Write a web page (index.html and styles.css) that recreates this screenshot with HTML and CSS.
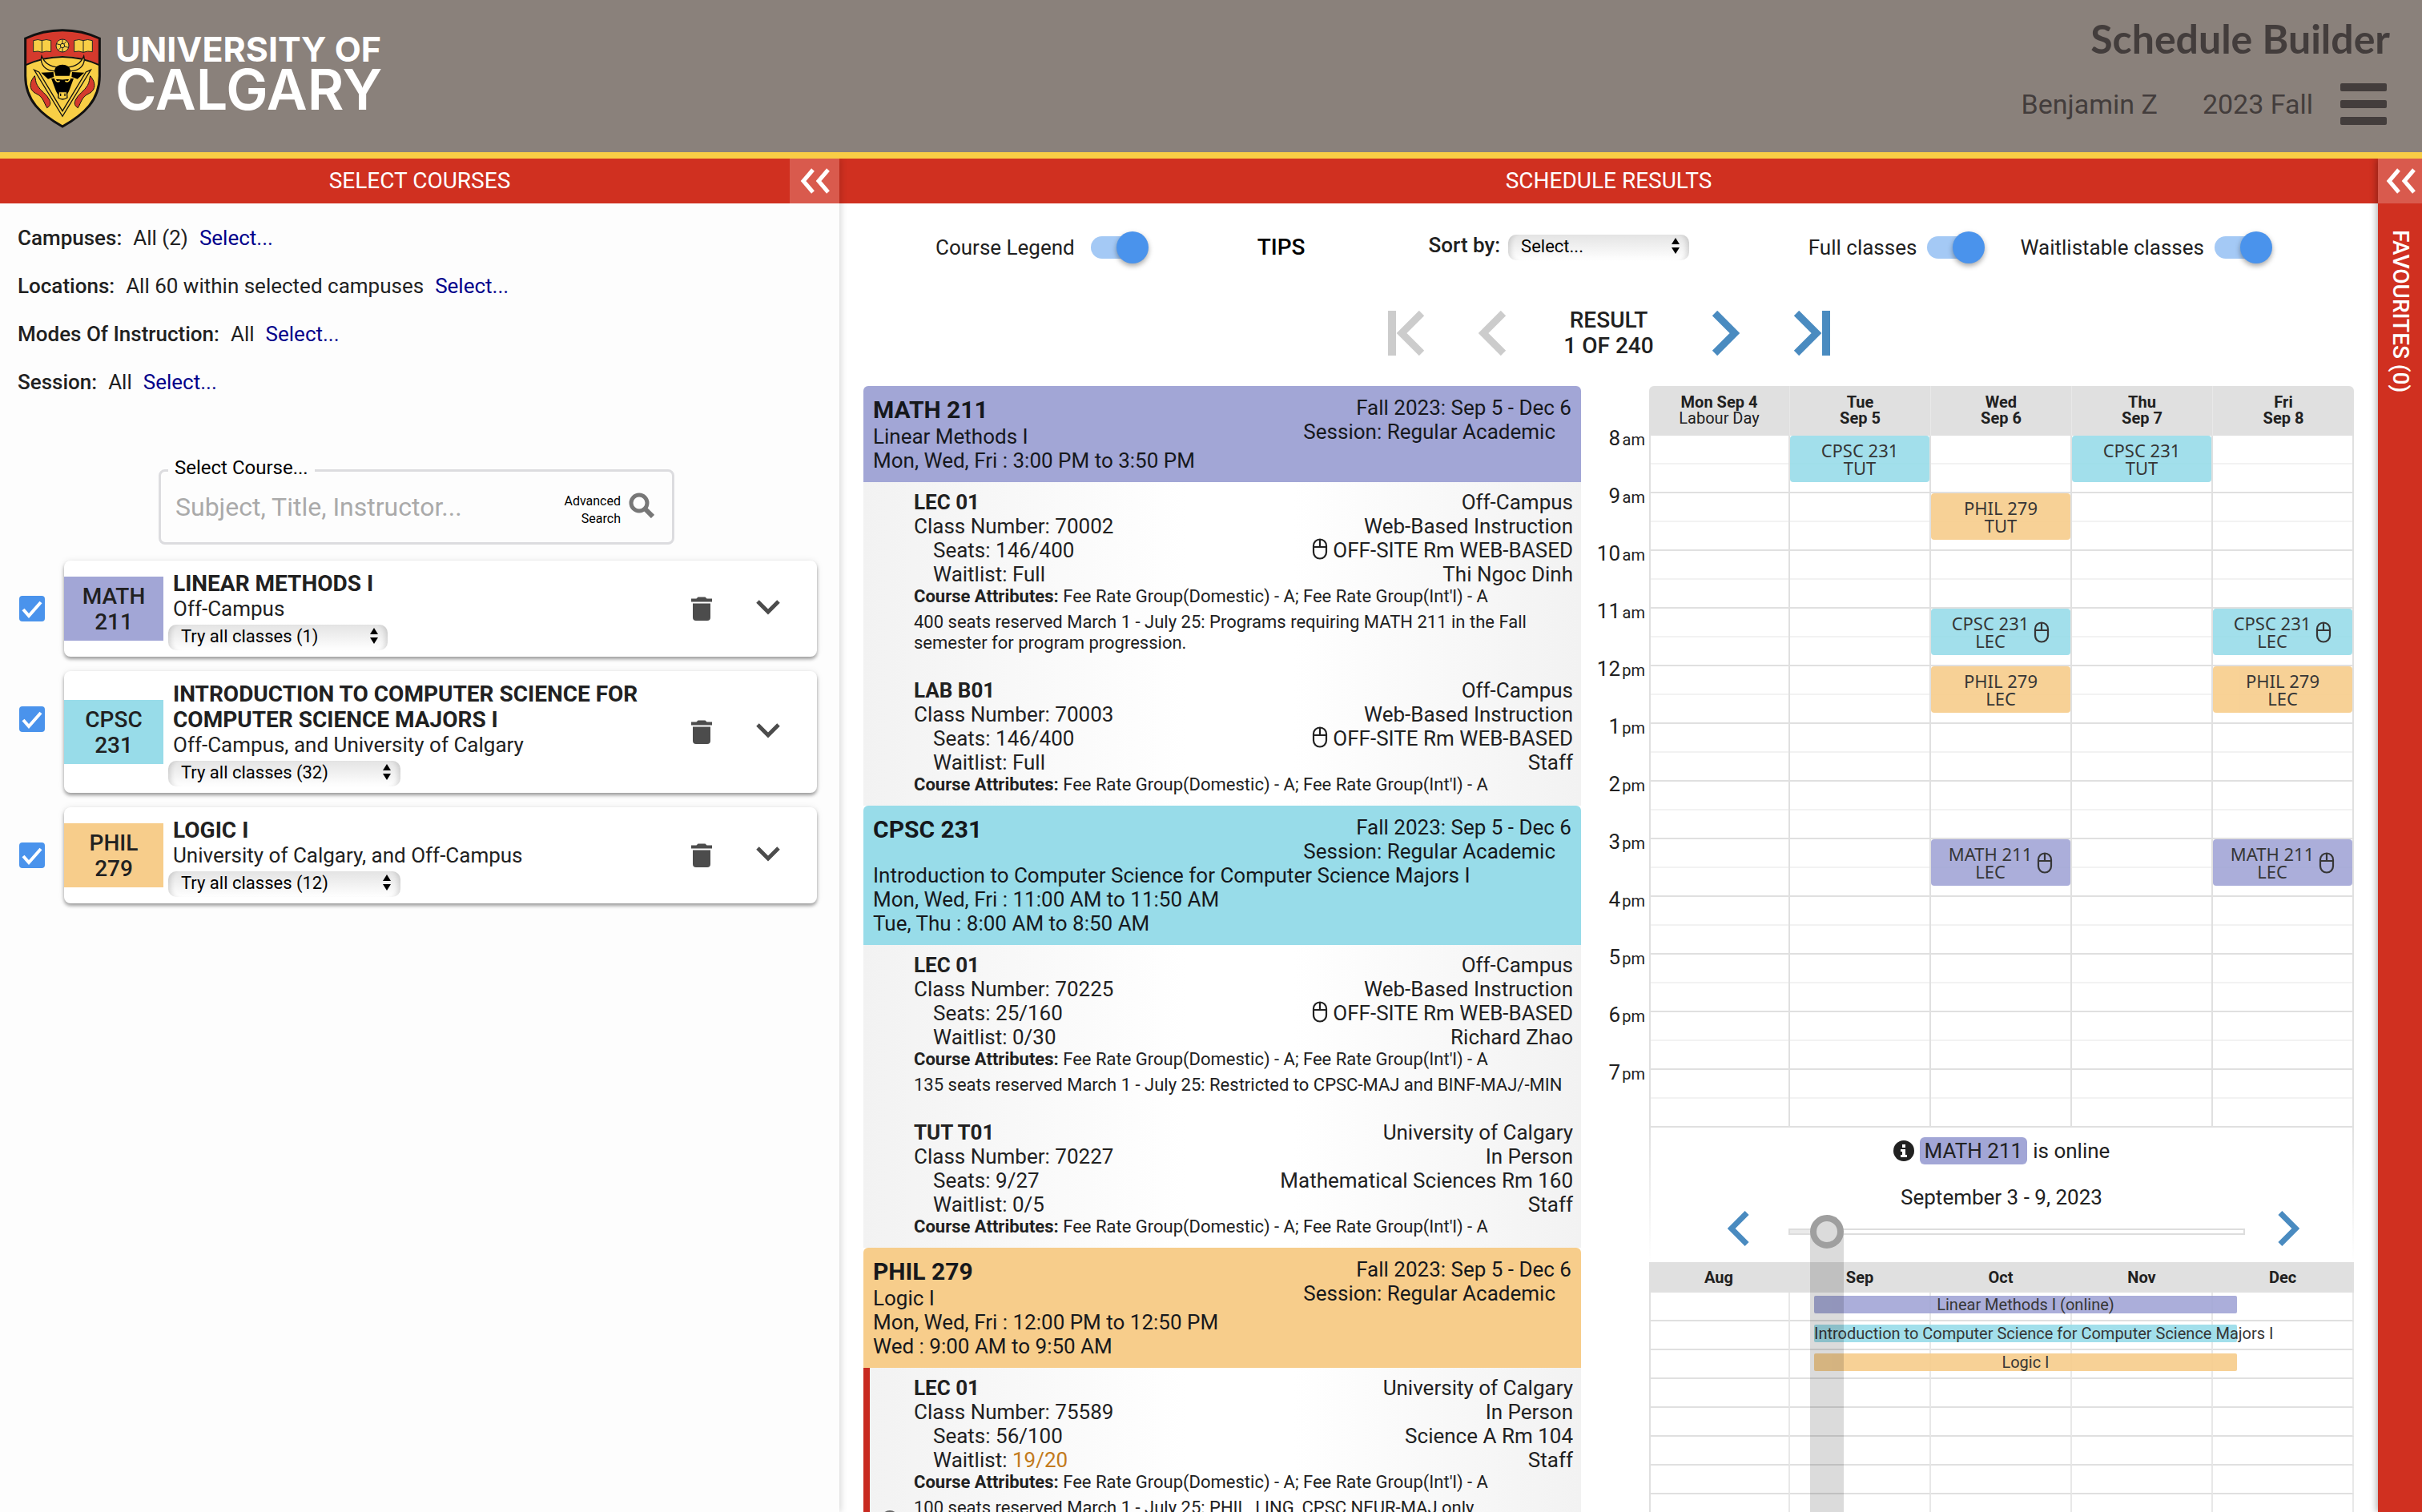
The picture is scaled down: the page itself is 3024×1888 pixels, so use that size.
FILE: index.html
```html
<!DOCTYPE html>
<html lang="en">
<head>
<meta charset="utf-8">
<title>Schedule Builder</title>
<link rel="stylesheet" href="styles.css">
</head>
<body>
<svg class="sprite" aria-hidden="true">
  <symbol id="double-left" viewBox="0 0 40 32"><path d="M18 2 6 16l12 14M37 2 25 16l12 14" fill="none" stroke="currentColor" stroke-width="5"/></symbol>
  <symbol id="left" viewBox="0 0 36 56"><path d="M31 3 6 28l25 25" fill="none" stroke="currentColor" stroke-width="9"/></symbol>
  <symbol id="right" viewBox="0 0 36 56"><path d="M5 3l25 25L5 53" fill="none" stroke="currentColor" stroke-width="9"/></symbol>
  <symbol id="first" viewBox="0 0 46 56"><path d="M0 0h10v56H0z" fill="currentColor"/><path d="M42 3 17 28l25 25" fill="none" stroke="currentColor" stroke-width="9"/></symbol>
  <symbol id="last" viewBox="0 0 46 56"><path d="M36 0h10v56H36z" fill="currentColor"/><path d="M4 3l25 25L4 53" fill="none" stroke="currentColor" stroke-width="9"/></symbol>
  <symbol id="down" viewBox="0 0 30 22"><path d="M2 2l13 13L28 2" fill="none" stroke="currentColor" stroke-width="5"/></symbol>
  <symbol id="trash" viewBox="0 0 26 30"><path d="M0 2.500h6.500l2-2h9l2 2H26v4H0zM2 8.500h22V26a4 4 0 0 1-4 4H6a4 4 0 0 1-4-4z" fill="currentColor"/></symbol>
  <symbol id="mouse" viewBox="0 0 20 27"><path d="M10 1.500a8 8 0 0 1 8 8v8a8 8 0 0 1-16 0v-8a8 8 0 0 1 8-8zM2 11h16M10 2v9" fill="none" stroke="currentColor" stroke-width="2.200"/></symbol>
  <symbol id="updown" viewBox="0 0 10 20"><path d="M5 0l5 8H0zM5 20l5-8H0z" fill="currentColor"/></symbol>
  <symbol id="search" viewBox="0 0 32 32"><circle cx="13" cy="13" r="10" fill="none" stroke="currentColor" stroke-width="5"/><path d="M20 20l10 10" stroke="currentColor" stroke-width="6"/></symbol>
</svg>

<header class="banner">
  <div class="logo">
    <svg class="shield" viewBox="60 48 288 372" role="img" aria-label="Crest">
      <path d="M65 84Q130 53 204 53t139 31v140c0 92-58 144-139 190C123 368 65 316 65 224z" fill="#f8cf46"/>
      <path d="M65 84Q130 53 204 53t139 31v98q-68-32-139-32T65 182z" fill="#d53a2d"/>
      <path d="M65 184Q134 153 204 153t139 31" fill="none" stroke="#111" stroke-width="6"/>
      <g fill="#f8cf46" stroke="#222" stroke-width="3">
        <path d="M95 92q18-7 32 0 16-7 34 0v42q-18-5-34 2-14-7-32-2zM127 92v44M248 92q18-7 34 0 16-7 34 0v42q-18-5-34 2-16-7-34-2zM282 92v44"/>
        <circle cx="204" cy="111" r="24"/>
        <path d="M204 87v16M204 119v16M182 104l15 4M211 114l15 4M188 128l11-11M209 105l11-11"/>
        <circle cx="204" cy="111" r="8"/>
      </g>
      <path d="M100 224c-24 28-20 56 8 68 24 12 26 32 38 52 14-8 14-18 10-28-10-24-34-34-46-56-8-14-6-24-10-36zM308 224c24 28 20 56-8 68-24 12-26 32-38 52-14-8-14-18-10-28 10-24 34-34 46-56 8-14 6-24 10-36z" fill="#d53a2d" stroke="#111" stroke-width="3"/>
      <path d="M98 202l18 8 88 146 88-146 18-8-106 174z" fill="#f8cf46" stroke="#111" stroke-width="4"/>
      <path d="M126 150c-8 30 14 58 54 56l10-14c-36-2-54-16-64-42zM284 150c8 30-14 58-54 56l-10-14c36-2 54-16 64-42z" fill="#f8cf46" stroke="#111" stroke-width="4"/>
      <path d="M174 208c0-34 60-34 60 0l-4 16h-52zM124 212l46-2 2 18-22 8zM286 212l-46-2-2 18 22 8zM162 234h84l-18 48-8 14h-32l-8-14z" fill="#000"/>
      <path d="M172 230q32 12 64 0M176 232q2 18 18 12M232 232q-2 18-18 12" fill="none" stroke="#f8cf46" stroke-width="5"/>
      <path d="M190 284h30l2 22q-18 12-34 0z" fill="#f8cf46" stroke="#111" stroke-width="4"/>
      <path d="M197 290v10M213 290v10" stroke="#111" stroke-width="4"/>
      <path d="M65 84Q130 53 204 53t139 31v140c0 92-58 144-139 190C123 368 65 316 65 224z" fill="none" stroke="#111" stroke-width="9"/>
    </svg>
    <div class="wordmark"><span class="wordmark-top">UNIVERSITY OF</span><span class="wordmark-main">CALGARY</span></div>
  </div>
  <div class="account">
    <h1 class="product">Schedule Builder</h1>
    <div class="account-row">
      <span>Benjamin Z</span><span>2023 Fall</span>
      <button class="menu" type="button" aria-label="Menu"><i></i><i></i><i></i></button>
    </div>
  </div>
</header>

<main class="workspace">
  <section class="panel panel-courses">
    <div class="bar"><h2 class="bar-title">SELECT COURSES</h2><button class="collapse" type="button" aria-label="Collapse courses"><svg><use href="#double-left"/></svg></button></div>
    <ul class="filters">
      <li><b>Campuses:</b><span>All (2)</span><a href="#">Select...</a></li>
      <li><b>Locations:</b><span>All 60 within selected campuses</span><a href="#">Select...</a></li>
      <li><b>Modes Of Instruction:</b><span>All</span><a href="#">Select...</a></li>
      <li><b>Session:</b><span>All</span><a href="#">Select...</a></li>
    </ul>
    <div class="search">
      <label class="search-label" for="course">Select Course...</label>
      <input class="search-input" id="course" type="text" placeholder="Subject, Title, Instructor...">
      <button class="advanced" type="button"><span>Advanced Search</span><svg><use href="#search"/></svg></button>
    </div>
    <ul class="courses">
      <li class="course">
        <input class="check" type="checkbox" checked aria-label="Include MATH 211">
        <div class="card">
          <div class="swatch math">MATH<br>211</div>
          <div class="card-body">
            <h3 class="card-title">LINEAR METHODS I</h3>
            <p class="card-sub">Off-Campus</p>
            <div class="picker picker-s"><select aria-label="Classes for MATH 211"><option>Try all classes (1)</option></select><svg><use href="#updown"/></svg></div>
          </div>
          <button class="icon-button" type="button" aria-label="Remove"><svg class="trash"><use href="#trash"/></svg></button>
          <button class="icon-button" type="button" aria-label="Expand"><svg class="down"><use href="#down"/></svg></button>
        </div>
      </li>
      <li class="course">
        <input class="check" type="checkbox" checked aria-label="Include CPSC 231">
        <div class="card">
          <div class="swatch cpsc">CPSC<br>231</div>
          <div class="card-body">
            <h3 class="card-title">INTRODUCTION TO COMPUTER SCIENCE FOR COMPUTER SCIENCE MAJORS I</h3>
            <p class="card-sub">Off-Campus, and University of Calgary</p>
            <div class="picker picker-m"><select aria-label="Classes for CPSC 231"><option>Try all classes (32)</option></select><svg><use href="#updown"/></svg></div>
          </div>
          <button class="icon-button" type="button" aria-label="Remove"><svg class="trash"><use href="#trash"/></svg></button>
          <button class="icon-button" type="button" aria-label="Expand"><svg class="down"><use href="#down"/></svg></button>
        </div>
      </li>
      <li class="course">
        <input class="check" type="checkbox" checked aria-label="Include PHIL 279">
        <div class="card">
          <div class="swatch phil">PHIL<br>279</div>
          <div class="card-body">
            <h3 class="card-title">LOGIC I</h3>
            <p class="card-sub">University of Calgary, and Off-Campus</p>
            <div class="picker picker-m"><select aria-label="Classes for PHIL 279"><option>Try all classes (12)</option></select><svg><use href="#updown"/></svg></div>
          </div>
          <button class="icon-button" type="button" aria-label="Remove"><svg class="trash"><use href="#trash"/></svg></button>
          <button class="icon-button" type="button" aria-label="Expand"><svg class="down"><use href="#down"/></svg></button>
        </div>
      </li>
    </ul>
  </section>

  <section class="panel panel-results">
    <div class="bar"><h2 class="bar-title">SCHEDULE RESULTS</h2></div>
    <div class="tools">
      <label class="toggle">Course Legend<input type="checkbox" checked></label>
      <button class="tips" type="button">TIPS</button>
      <div class="sort"><label for="sort">Sort by:</label><div class="picker picker-sort"><select id="sort"><option>Select...</option></select><svg><use href="#updown"/></svg></div></div>
      <div class="toggles">
        <label class="toggle toggle-near">Full classes<input type="checkbox" checked></label>
        <label class="toggle toggle-near">Waitlistable classes<input type="checkbox" checked></label>
      </div>
    </div>
    <nav class="pager" aria-label="Results">
      <button type="button" disabled aria-label="First"><svg class="wide"><use href="#first"/></svg></button>
      <button type="button" disabled aria-label="Previous"><svg><use href="#left"/></svg></button>
      <p>RESULT<br>1 OF 240</p>
      <button type="button" aria-label="Next"><svg><use href="#right"/></svg></button>
      <button type="button" aria-label="Last"><svg class="wide"><use href="#last"/></svg></button>
    </nav>

    <div class="columns">
      <div class="list">
        <header class="list-head math">
          <p class="term">Fall 2023: Sep 5 - Dec 6<span>Session: Regular Academic</span></p>
          <h3>MATH 211</h3>
          <p class="name">Linear Methods I</p>
          <p>Mon, Wed, Fri : 3:00 PM to 3:50 PM</p>
        </header>
        <article class="entry">
          <div class="entry-cols">
            <div><h4>LEC 01</h4><p>Class Number: 70002</p><p class="in">Seats: 146/400</p><p class="in">Waitlist: Full</p></div>
            <div class="where"><p>Off-Campus</p><p>Web-Based Instruction</p><p><svg class="mouse"><use href="#mouse"/></svg>OFF-SITE Rm WEB-BASED</p><p>Thi Ngoc Dinh</p></div>
          </div>
          <p class="attrs"><b>Course Attributes:</b> Fee Rate Group(Domestic) - A; Fee Rate Group(Int'l) - A</p>
          <p class="note">400 seats reserved March 1 - July 25: Programs requiring MATH 211 in the Fall semester for program progression.</p>
        </article>
        <article class="entry">
          <div class="entry-cols">
            <div><h4>LAB B01</h4><p>Class Number: 70003</p><p class="in">Seats: 146/400</p><p class="in">Waitlist: Full</p></div>
            <div class="where"><p>Off-Campus</p><p>Web-Based Instruction</p><p><svg class="mouse"><use href="#mouse"/></svg>OFF-SITE Rm WEB-BASED</p><p>Staff</p></div>
          </div>
          <p class="attrs"><b>Course Attributes:</b> Fee Rate Group(Domestic) - A; Fee Rate Group(Int'l) - A</p>
        </article>
        <header class="list-head cpsc">
          <p class="term">Fall 2023: Sep 5 - Dec 6<span>Session: Regular Academic</span></p>
          <h3>CPSC 231</h3>
          <p class="name">Introduction to Computer Science for Computer Science Majors I</p>
          <p>Mon, Wed, Fri : 11:00 AM to 11:50 AM</p>
          <p>Tue, Thu : 8:00 AM to 8:50 AM</p>
        </header>
        <article class="entry">
          <div class="entry-cols">
            <div><h4>LEC 01</h4><p>Class Number: 70225</p><p class="in">Seats: 25/160</p><p class="in">Waitlist: 0/30</p></div>
            <div class="where"><p>Off-Campus</p><p>Web-Based Instruction</p><p><svg class="mouse"><use href="#mouse"/></svg>OFF-SITE Rm WEB-BASED</p><p>Richard Zhao</p></div>
          </div>
          <p class="attrs"><b>Course Attributes:</b> Fee Rate Group(Domestic) - A; Fee Rate Group(Int'l) - A</p>
          <p class="note">135 seats reserved March 1 - July 25: Restricted to CPSC-MAJ and BINF-MAJ/-MIN</p>
        </article>
        <article class="entry">
          <div class="entry-cols">
            <div><h4>TUT T01</h4><p>Class Number: 70227</p><p class="in">Seats: 9/27</p><p class="in">Waitlist: 0/5</p></div>
            <div class="where"><p>University of Calgary</p><p>In Person</p><p>Mathematical Sciences Rm 160</p><p>Staff</p></div>
          </div>
          <p class="attrs"><b>Course Attributes:</b> Fee Rate Group(Domestic) - A; Fee Rate Group(Int'l) - A</p>
        </article>
        <header class="list-head phil">
          <p class="term">Fall 2023: Sep 5 - Dec 6<span>Session: Regular Academic</span></p>
          <h3>PHIL 279</h3>
          <p class="name">Logic I</p>
          <p>Mon, Wed, Fri : 12:00 PM to 12:50 PM</p>
          <p>Wed : 9:00 AM to 9:50 AM</p>
        </header>
        <article class="entry entry-flagged">
          <div class="entry-cols">
            <div><h4>LEC 01</h4><p>Class Number: 75589</p><p class="in">Seats: 56/100</p><p class="in">Waitlist: <span class="warn">19/20</span></p></div>
            <div class="where"><p>University of Calgary</p><p>In Person</p><p>Science A Rm 104</p><p>Staff</p></div>
          </div>
          <p class="attrs"><b>Course Attributes:</b> Fee Rate Group(Domestic) - A; Fee Rate Group(Int'l) - A</p>
          <p class="note">100 seats reserved March 1 - July 25: PHIL, LING, CPSC NEUR-MAJ only</p>
          <i class="pin"></i>
        </article>
      </div>

      <div class="hours">
        <p>8<small>am</small></p><p>9<small>am</small></p><p>10<small>am</small></p><p>11<small>am</small></p><p>12<small>pm</small></p><p>1<small>pm</small></p><p>2<small>pm</small></p><p>3<small>pm</small></p><p>4<small>pm</small></p><p>5<small>pm</small></p><p>6<small>pm</small></p><p>7<small>pm</small></p>
      </div>

      <div class="calendar">
        <div class="week">
          <table class="grid week-grid">
            <thead><tr><th>Mon Sep 4<br><span>Labour Day</span></th><th>Tue<br>Sep 5</th><th>Wed<br>Sep 6</th><th>Thu<br>Sep 7</th><th>Fri<br>Sep 8</th></tr></thead>
            <tbody>
              <tr><td></td><td></td><td></td><td></td><td></td></tr>
              <tr><td></td><td></td><td></td><td></td><td></td></tr>
              <tr><td></td><td></td><td></td><td></td><td></td></tr>
              <tr><td></td><td></td><td></td><td></td><td></td></tr>
              <tr><td></td><td></td><td></td><td></td><td></td></tr>
              <tr><td></td><td></td><td></td><td></td><td></td></tr>
              <tr><td></td><td></td><td></td><td></td><td></td></tr>
              <tr><td></td><td></td><td></td><td></td><td></td></tr>
              <tr><td></td><td></td><td></td><td></td><td></td></tr>
              <tr><td></td><td></td><td></td><td></td><td></td></tr>
              <tr><td></td><td></td><td></td><td></td><td></td></tr>
              <tr><td></td><td></td><td></td><td></td><td></td></tr>
            </tbody>
          </table>
          <div class="events">
            <div class="event cpsc" style="grid-area:1/2"><span>CPSC 231<br>TUT</span></div>
            <div class="event cpsc" style="grid-area:1/4"><span>CPSC 231<br>TUT</span></div>
            <div class="event phil" style="grid-area:2/3"><span>PHIL 279<br>TUT</span></div>
            <div class="event cpsc" style="grid-area:4/3"><span>CPSC 231<br>LEC</span><svg class="mouse"><use href="#mouse"/></svg></div>
            <div class="event cpsc" style="grid-area:4/5"><span>CPSC 231<br>LEC</span><svg class="mouse"><use href="#mouse"/></svg></div>
            <div class="event phil" style="grid-area:5/3"><span>PHIL 279<br>LEC</span></div>
            <div class="event phil" style="grid-area:5/5"><span>PHIL 279<br>LEC</span></div>
            <div class="event math" style="grid-area:8/3"><span>MATH 211<br>LEC</span><svg class="mouse"><use href="#mouse"/></svg></div>
            <div class="event math" style="grid-area:8/5"><span>MATH 211<br>LEC</span><svg class="mouse"><use href="#mouse"/></svg></div>
          </div>
        </div>
        <div class="term-view">
          <div class="term-head">
            <p class="online"><svg class="info" viewBox="0 0 26 26"><circle cx="13" cy="13" r="13" fill="#212121"/><path d="M11 5h4v4h-4zM9 11h6v7h2v3H9v-3h2v-4H9z" fill="#fff"/></svg><span class="chip math">MATH 211</span>is online</p>
            <p class="range-label">September 3 - 9, 2023</p>
            <div class="slider">
              <button type="button" aria-label="Previous week"><svg><use href="#left"/></svg></button>
              <input type="range" min="0" max="1000" value="48" aria-label="Week">
              <button type="button" aria-label="Next week"><svg><use href="#right"/></svg></button>
            </div>
          </div>
          <div class="months">
            <table class="grid month-grid">
              <thead><tr><th>Aug</th><th>Sep</th><th>Oct</th><th>Nov</th><th>Dec</th></tr></thead>
              <tbody>
                <tr><td></td><td></td><td></td><td></td><td></td></tr>
                <tr><td></td><td></td><td></td><td></td><td></td></tr>
                <tr><td></td><td></td><td></td><td></td><td></td></tr>
                <tr><td></td><td></td><td></td><td></td><td></td></tr>
                <tr><td></td><td></td><td></td><td></td><td></td></tr>
                <tr><td></td><td></td><td></td><td></td><td></td></tr>
                <tr><td></td><td></td><td></td><td></td><td></td></tr>
                <tr><td></td><td></td><td></td><td></td><td></td></tr>
              </tbody>
            </table>
            <div class="spans">
              <p class="span math">Linear Methods I (online)</p>
              <p class="span cpsc">Introduction to Computer Science for Computer Science Majors I</p>
              <p class="span phil">Logic I</p>
            </div>
          </div>
          <div class="week-marker"></div>
        </div>
      </div>
    </div>
  </section>

  <aside class="favourites">
    <button class="collapse" type="button" aria-label="Open favourites"><svg><use href="#double-left"/></svg></button>
    <p>FAVOURITES (0)</p>
  </aside>
</main>
</body>
</html>
```

FILE: styles.css
```css
:root {
  --red: #d03020;
  --red-light: #d95a4d;
  --blue: #4a8bc0;
  --math: #a2a6d6;
  --cpsc: #98dce9;
  --phil: #f7cd8b;
  --line: #e0e0e0;
}

* { box-sizing: border-box; }

body {
  margin: 0;
  height: 100vh;
  overflow: hidden;
  display: flex;
  flex-direction: column;
  font: 26px/30px Roboto, "Liberation Sans", sans-serif;
  color: #212121;
  background: #fff;
}

h1, h2, h3, h4, p, ul { margin: 0; padding: 0; }
ul { list-style: none; }
button { border: 0; padding: 0; background: none; font: inherit; color: inherit; }
svg { display: block; }
.sprite { position: absolute; width: 0; height: 0; }

.math { background: var(--math); }
.cpsc { background: var(--cpsc); }
.phil { background: var(--phil); }

/* Banner */
.banner {
  flex: none;
  height: 198px;
  display: flex;
  justify-content: space-between;
  border-bottom: 8px solid #f8cd46;
  background: #8a817b;
}
.logo { display: flex; gap: 18px; padding: 36px 0 0 30px; }
.shield { width: 96px; height: 124px; }
.wordmark {
  display: flex;
  flex-direction: column;
  padding-top: 4px;
  font-family: Inter, sans-serif;
  color: #fff;
}
.wordmark-top { font-size: 43px; line-height: 42px; font-weight: 700; }
.wordmark-main { font-size: 70px; line-height: 60px; font-weight: 600; }
.account { padding: 18px 40px 0 0; color: #433d3c; text-align: right; }
.product {
  font: 700 50px/60px Lato, "Open Sans", sans-serif;
  margin-bottom: 26px;
}
.account-row {
  display: flex;
  align-items: center;
  justify-content: flex-end;
  padding-right: 4px;
  font-size: 34px;
  line-height: 52px;
}
.account-row span { margin-left: 56px; }
.menu { width: 58px; margin-left: 34px; display: grid; gap: 11px; }
.menu i { height: 10px; border-radius: 2px; background: #433d3c; }

/* Panels */
.workspace {
  flex: 1;
  min-height: 0;
  display: grid;
  grid-template-columns: minmax(0, 1048fr) minmax(0, 1921fr) 55px;
  overflow: hidden;
}
.panel { min-height: 0; }
.panel-courses {
  position: relative;
  z-index: 1;
  background: #fdfdfd;
  box-shadow: 2px 0 8px rgba(0, 0, 0, .16);
}
.bar {
  display: grid;
  grid-template-columns: 62px 1fr 62px;
  height: 56px;
  background: var(--red);
  color: #fff;
}
.bar-title {
  grid-column: 2;
  font-size: 28px;
  line-height: 56px;
  font-weight: 400;
  text-align: center;
}
.collapse {
  display: flex;
  align-items: center;
  justify-content: center;
  height: 56px;
  background: var(--red-light);
  color: #fff;
}
.collapse svg { width: 40px; height: 32px; }

/* Course selection */
.filters { padding: 28px 22px 0; }
.filters li { display: flex; gap: 14px; height: 60px; line-height: 30px; }
.filters b { font-weight: 500; }
.filters a { color: #00008b; text-decoration: none; }

.search {
  position: relative;
  display: flex;
  width: 644px;
  height: 94px;
  margin: 64px 0 20px 198px;
  padding: 0 22px 0 18px;
  border: 3px solid #dcdcdf;
  border-radius: 8px;
}
.search-label {
  position: absolute;
  top: -20px;
  left: 9px;
  padding: 0 8px;
  background: #fdfdfd;
  color: #000;
  font-size: 24px;
}
.search-input {
  flex: 1;
  min-width: 0;
  border: 0;
  padding: 0;
  background: none;
  font: 32px/40px Roboto, sans-serif;
}
.search-input::placeholder { color: #aaa; }
.advanced { display: flex; align-items: center; gap: 10px; color: #000; }
.advanced span { width: 80px; padding-top: 8px; font-size: 16px; line-height: 22px; text-align: right; }
.advanced svg { width: 32px; height: 32px; margin-bottom: 4px; color: #777; }

.courses { display: grid; gap: 18px; padding: 0 28px 0 24px; }
.course { display: flex; align-items: flex-start; gap: 24px; }
.check {
  appearance: none;
  flex: none;
  width: 32px;
  height: 32px;
  margin: 44px 0 0;
  border-radius: 4px;
  background: #4a93ec url("data:image/svg+xml,%3Csvg xmlns='http://www.w3.org/2000/svg' viewBox='0 0 32 32'%3E%3Cpath d='M5 17l7 8L27 8' fill='none' stroke='white' stroke-width='4'/%3E%3C/svg%3E");
}
.card {
  flex: 1;
  display: flex;
  align-items: center;
  padding-right: 46px;
  border-radius: 8px;
  background: #fff;
  box-shadow: 0 3px 4px rgba(0, 0, 0, .36), 0 0 8px rgba(0, 0, 0, .08);
}
.swatch {
  width: 124px;
  padding: 9px 0 7px;
  font-size: 28px;
  line-height: 32px;
  font-weight: 500;
  text-align: center;
}
.card-body { flex: 1; padding: 13px 0 10px 12px; }
.card-title { max-width: 620px; font-size: 28px; line-height: 32px; font-weight: 700; }
.card-sub { margin-bottom: 3px; }
.icon-button { display: flex; justify-content: center; width: 30px; margin-left: 53px; color: #4c4c4c; }
.trash { width: 26px; height: 30px; }
.down { width: 30px; height: 22px; }

.picker { position: relative; height: 32px; }
.picker select {
  appearance: none;
  width: 100%;
  height: 32px;
  border: 0;
  border-radius: 10px;
  padding: 0 16px 3px;
  background: linear-gradient(#e4e4e4, #f0f0f0 45%, #fff);
  box-shadow: inset 8px 0 6px -5px rgba(0, 0, 0, .14), inset -8px 0 6px -5px rgba(0, 0, 0, .14);
  font: 22px/29px Roboto, sans-serif;
  color: #000;
}
.picker svg { position: absolute; top: 6px; right: 12px; width: 10px; height: 20px; color: #000; }
.picker-s, .picker-m { margin-left: -6px; }
.picker-s { width: 274px; }
.picker-m { width: 290px; }
.picker-sort { width: 226px; }

/* Result tools */
.panel-results { display: flex; flex-direction: column; overflow: hidden; }
.tools {
  flex: none;
  display: flex;
  align-items: center;
  height: 80px;
  padding: 30px 132px 0 120px;
}
.toggle { display: flex; align-items: center; gap: 20px; }
.toggle-near { gap: 13px; }
.toggle input {
  appearance: none;
  position: relative;
  width: 68px;
  height: 28px;
  margin: 0 4px 0 0;
  border-radius: 14px;
  background: #a4c9f5;
}
.toggle input::before {
  content: "";
  position: absolute;
  top: -6px;
  right: -4px;
  width: 40px;
  height: 40px;
  border-radius: 50%;
  background: #4a93ec;
  box-shadow: 0 3px 6px rgba(0, 0, 0, .35);
}
.toggles { display: flex; gap: 44px; margin-left: auto; }
.tips { margin-left: 136px; font-size: 28px; font-weight: 500; color: #000; }
.sort { display: flex; gap: 10px; margin: 0 0 4px 154px; }
.sort label { font-weight: 500; }

.pager {
  flex: none;
  display: flex;
  align-items: center;
  justify-content: center;
  height: 148px;
  padding-top: 16px;
  color: var(--blue);
}
.pager button + button { margin-left: 67px; }
.pager button:disabled { color: #ccc; }
.pager svg { width: 36px; height: 56px; }
.pager svg.wide { width: 46px; }
.pager p {
  width: 254px;
  font-size: 28px;
  line-height: 32px;
  font-weight: 500;
  color: #212121;
  text-align: center;
}

.columns {
  flex: 1;
  min-height: 0;
  display: grid;
  grid-template-columns: minmax(0, 896fr) 85px minmax(0, 880fr);
  grid-template-rows: minmax(0, 1fr);
  padding: 0 30px;
}

/* Class list */
.list { overflow: hidden; }
.list-head { padding: 12px; border-radius: 6px 6px 0 0; color: #16181c; }
.list-head h3 { font-size: 30px; line-height: 36px; font-weight: 700; }
.list-head .name { display: inline-block; vertical-align: top; }
.term { float: right; text-align: right; }
.term span { display: block; margin-right: 20px; }
.entry {
  position: relative;
  padding: 10px 10px 13px 55px;
  border-left: 8px solid transparent;
  background: linear-gradient(90deg, #f2f2f2, #fff 45%, #fff 60%, #f2f2f2) border-box;
}
.entry-flagged { border-left-color: #c82a20; }
.entry-cols { display: flex; justify-content: space-between; }
.entry h4 { font-size: 26px; line-height: 30px; font-weight: 700; }
.in { padding-left: 24px; }
.where { text-align: right; }
.where p { display: flex; justify-content: flex-end; gap: 6px; }
.mouse { flex: none; width: 20px; height: 27px; }
.attrs, .note { font-size: 22px; line-height: 26px; }
.note { margin: 6px 0 8px; }
.warn { color: #c37a1c; }
.pin {
  position: absolute;
  top: 178px;
  left: 14px;
  width: 22px;
  height: 22px;
  border-radius: 50%;
  background: #666;
}

/* Week calendar */
.hours { padding: 47px 5px 0 0; text-align: right; }
.hours p { height: 72px; line-height: 36px; }
.hours small { display: inline-block; width: 31px; font-size: 20px; }
.calendar { min-height: 0; display: flex; flex-direction: column; }
.week { position: relative; flex: none; }
.grid { width: 100%; table-layout: fixed; border-collapse: separate; border-spacing: 0; }
.grid th {
  padding: 0;
  border-right: 2px solid var(--line);
  background: var(--line);
  font-size: 20px;
  line-height: 20px;
  font-weight: 700;
}
.grid th span { font-weight: 400; }
.grid td { padding: 0; border: solid var(--line); border-width: 0 2px 2px 0; }
.grid td:first-child { border-left-width: 2px; }
.week-grid th { height: 62px; padding-bottom: 2px; border-right: 1px solid #e8e8e8; }
.week-grid th:first-child { border-radius: 6px 0 0; }
.week-grid th:last-child { border-right: 0; border-radius: 0 6px 0 0; }
.week-grid td { height: 72px; background: linear-gradient(#f2f2f2, #f2f2f2) 0 34px / 100% 2px no-repeat; }
.events {
  position: absolute;
  inset: 62px 0 0;
  display: grid;
  grid-template: repeat(12, 72px) / repeat(5, minmax(0, 1fr));
}
.event {
  display: flex;
  align-items: center;
  justify-content: center;
  gap: 6px;
  height: 58px;
  margin-right: 2px;
  border-radius: 4px;
  font: 22px/22px "Noto Sans", sans-serif;
  text-align: center;
  opacity: .9;
}

/* Term view */
.term-view { position: relative; flex: 1; min-height: 0; overflow: hidden; }
.term-head {
  height: 168px;
  padding-top: 12px;
  border: solid;
  border-width: 0 2px;
  border-image: linear-gradient(var(--line), #fff) 1;
  text-align: center;
}
.online { display: flex; align-items: center; justify-content: center; gap: 7px; height: 34px; }
.info { width: 26px; height: 26px; }
.chip { padding: 2px 6px; border-radius: 6px; }
.range-label { margin-top: 26px; }
.slider {
  position: relative;
  z-index: 1;
  display: flex;
  align-items: center;
  padding: 2px 66px 0 96px;
  color: var(--blue);
}
.slider svg { width: 28px; height: 44px; }
.slider input {
  appearance: none;
  flex: 1;
  min-width: 0;
  height: 8px;
  margin: 8px 40px 0 48px;
  border: 2px solid #ddd;
  background: linear-gradient(90deg, #eaeaea 48px, #fff 48px);
}
.slider input::-webkit-slider-thumb {
  appearance: none;
  width: 42px;
  height: 42px;
  border: 8px solid #9f9f9f;
  border-radius: 50%;
  background: #dbdbdb;
}
.months { position: relative; }
.month-grid th { height: 38px; }
.month-grid td { height: 36px; border-right-color: #e8e8e8; }
.spans {
  position: absolute;
  top: 42px;
  left: 0;
  right: 0;
  display: grid;
  grid-template-columns: minmax(0, 1fr);
  gap: 14px;
  padding: 0 146px 0 206px;
}
.span {
  height: 22px;
  border-radius: 2px;
  font-size: 20px;
  line-height: 22px;
  text-align: center;
  white-space: nowrap;
  opacity: .9;
}
.week-marker {
  position: absolute;
  top: 130px;
  bottom: 0;
  left: 201px;
  width: 42px;
  background: rgba(0, 0, 0, .14);
}

/* Favourites rail */
.favourites {
  position: relative;
  background: var(--red);
  color: #fff;
  box-shadow: -2px 0 8px rgba(0, 0, 0, .3);
}
.favourites .collapse { width: 100%; }
.favourites p {
  margin-top: 33px;
  writing-mode: vertical-rl;
  font-size: 28px;
  line-height: 56px;
  font-weight: 500;
}
```
